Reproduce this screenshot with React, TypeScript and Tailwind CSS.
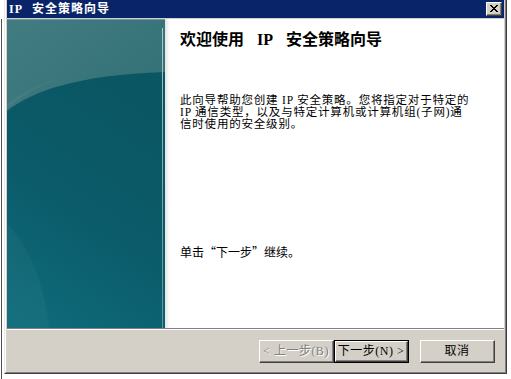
import React from 'react';

const FONT = "font-['Liberation_Serif','Noto_Sans_CJK_SC',serif]";

function CloseButton() {
  return (
    <div className="w-[16px] h-[14px] bg-[#d4d0c8] border-t border-l border-t-white border-l-white border-r border-b border-r-[#404040] border-b-[#404040]">
      <div className="w-full h-full border-r border-b border-r-[#808080] border-b-[#808080] flex items-center justify-center">
        <svg width="8" height="7" viewBox="0 0 8 7" shapeRendering="crispEdges">
          <path d="M0 0h2v1h-2zM6 0h2v1h-2zM1 1h2v1h-2zM5 1h2v1h-2zM2 2h4v1h-4zM3 3h2v1h-2zM2 4h4v1h-4zM1 5h2v1h-2zM5 5h2v1h-2zM0 6h2v1h-2zM6 6h2v1h-2z" fill="#000" />
        </svg>
      </div>
    </div>
  );
}

function WinButton(props: { label: string; isDefault?: boolean; disabled?: boolean }) {
  const { label, isDefault, disabled } = props;
  const face = (
    <div className="w-full h-full bg-[#d4d0c8] border-t border-l border-t-white border-l-white border-r border-b border-r-[#404040] border-b-[#404040]">
      <div className="w-full h-full border-r border-b border-r-[#808080] border-b-[#808080] flex items-center justify-center">
        <span
          className={
            disabled
              ? 'text-[12px] leading-[12px] tracking-[0.5px] text-[#808080] [text-shadow:1px_1px_0_#ffffff] whitespace-pre'
              : 'text-[12px] leading-[12px] tracking-[0.5px] text-black whitespace-pre'
          }
        >
          {label}
        </span>
      </div>
    </div>
  );
  return isDefault ? (
    <div className="w-[75px] h-[23px] border border-black">{face}</div>
  ) : (
    <div className="w-[75px] h-[23px]">{face}</div>
  );
}

function SidePicture() {
  return (
    <svg width="158" height="309" viewBox="0 0 158 309" className="block">
      <defs>
        <linearGradient id="topArea" x1="0" y1="0" x2="0.4" y2="1">
          <stop offset="0" stopColor="#417c81" />
          <stop offset="1" stopColor="#286870" />
        </linearGradient>
        <linearGradient id="lowArea" x1="0.6" y1="0" x2="0.2" y2="1">
          <stop offset="0" stopColor="#0b5663" />
          <stop offset="0.5" stopColor="#0b5b6a" />
          <stop offset="1" stopColor="#0e6a79" />
        </linearGradient>
        <linearGradient id="edge" x1="0" y1="0" x2="0" y2="1">
          <stop offset="0" stopColor="#b9d2d4" stopOpacity="0.9" />
          <stop offset="1" stopColor="#7fa9b0" stopOpacity="0.7" />
        </linearGradient>
      </defs>
      <rect width="158" height="309" fill="url(#topArea)" />
      <rect width="158" height="1" fill="#6f9a9e" />
      <path d="M0 92 C 25 72, 70 56, 158 53 L158 309 L0 309 Z" fill="url(#lowArea)" />
      <path d="M0 85 C 20 70, 40 62, 60 58 C 35 64, 15 76, 0 90 Z" fill="#ffffff" opacity="0.05" />
      <path d="M0 205 C 25 230, 38 270, 42 309 L0 309 Z" fill="#ffffff" opacity="0.035" />
      <rect x="155" y="9" width="1" height="300" fill="url(#edge)" />
    </svg>
  );
}

export default function App() {
  return (
    <div className={`w-[511px] h-[379px] bg-white flex ${FONT}`}>
      <div className="w-[4px] pt-[19px] pl-px">
        <div className="w-px h-full bg-[#505050]" />
      </div>
      <div className="w-[503px] h-[374px] border-l border-l-[#e8e8e8] border-r border-r-[#404040] border-b border-b-[#404040]">
        <div className="w-full h-full border-l border-l-white border-r border-r-[#808080] border-b border-b-[#808080] bg-[#d4d0c8] pl-px pr-px pb-px flex flex-col">
          {/* title bar */}
          <div className="h-[18px] bg-[#0a246a] flex items-center justify-between pl-[2px] pr-[2px]">
            <div className="flex items-center text-white font-bold text-[12px] leading-[12px]">
              <span className="tracking-[1px]">IP</span>
              <span className="ml-[9px] tracking-[1px]">安全策略向导</span>
            </div>
            <CloseButton />
          </div>
          <div className="h-px" />
          {/* body */}
          <div className="h-[309px] flex">
            <SidePicture />
            <div className="flex-1 bg-white flex">
              <div className="w-[5px] bg-gradient-to-r from-[#e4e4e4] to-white" />
              <div className="flex-1 pl-[10px] pt-[13px] flex flex-col">
                <div className="text-[16px] leading-[16px] font-bold text-black flex items-center">
                  <span>欢迎使用</span>
                  <span className="ml-[13px]">IP</span>
                  <span className="ml-[13px]">安全策略向导</span>
                </div>
                <div className="mt-[46px] text-[11.5px] text-black whitespace-pre tracking-[0.8px] flex flex-col">
                  <div className="h-[12px] leading-[12px]">此向导帮助您创建 IP 安全策略。您将指定对于特定的</div>
                  <div className="h-[12px] leading-[12px]">IP 通信类型，以及与特定计算机或计算机组(子网)通</div>
                  <div className="h-[12px] leading-[12px]">信时使用的安全级别。</div>
                </div>
                <div className="mt-[116px] text-[12px] leading-[12px] text-black">
                  单击<span className="font-['Noto_Sans_CJK_SC',sans-serif]">“</span>下一步<span className="font-['Noto_Sans_CJK_SC',sans-serif]">”</span>继续。
                </div>
              </div>
            </div>
          </div>
          {/* separator */}
          <div className="h-px bg-[#808080]" />
          <div className="h-px bg-white" />
          {/* buttons */}
          <div className="flex-1 flex justify-end items-start pt-[10px] pr-[9px]">
            <WinButton label="< 上一步(B)" disabled />
            <WinButton label="下一步(N) >" isDefault />
            <div className="w-[11px]" />
            <WinButton label="取消" />
          </div>
        </div>
      </div>
    </div>
  );
}
